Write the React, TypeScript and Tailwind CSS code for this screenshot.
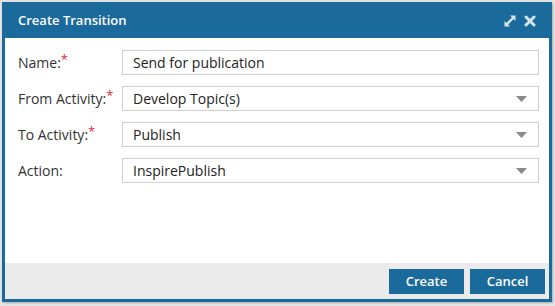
const fields = [
  { label: "Name:", required: true, value: "Send for publication", select: false },
  { label: "From Activity:", required: true, value: "Develop Topic(s)", select: true },
  { label: "To Activity:", required: true, value: "Publish", select: true },
  { label: "Action:", required: false, value: "InspirePublish", select: true },
]

const Caret = () => (
  <svg width="11" height="6" viewBox="0 0 11 6" className="shrink-0">
    <path d="M0 0 H11 L5.5 6 Z" fill="#8a8a8a" />
  </svg>
)

export default function App() {
  return (
    <div className="w-[555px] h-[306px] bg-[#e4e4e4] pl-[2px] pt-[2px]" style={{ fontFamily: '"Open Sans", "Noto Sans", sans-serif' }}>
      <div className="w-[550px] h-[300px] border-[3px] border-[#1b6a9c] flex flex-col bg-white shadow-[1px_1px_2px_rgba(0,0,0,0.25)]">
        <div className="h-[33px] shrink-0 bg-[#1b6a9c] flex items-center pl-[13px] pr-[13px]">
          <span className="text-white text-[13px] font-semibold -mt-[2px]">Create Transition</span>
          <div className="ml-auto flex items-center gap-[7px] -mt-[2px]">
            <svg width="14" height="14" viewBox="0 0 14 14">
              <path d="M3 11 L11 3" stroke="#d6e4ee" strokeWidth="2.4" />
              <path d="M7 1.5 H12.5 V7 Z" fill="#d6e4ee" />
              <path d="M1.5 7 V12.5 H7 Z" fill="#d6e4ee" />
            </svg>
            <svg width="12" height="12" viewBox="0 0 12 12">
              <path d="M2 2 L10 10 M10 2 L2 10" stroke="#d6e4ee" strokeWidth="3" strokeLinecap="round" />
            </svg>
          </div>
        </div>

        <div className="flex-1 flex flex-col gap-[11px] pt-[12px] pl-[13px] pr-[10px]">
          {fields.map((f) => (
            <div key={f.label} className="flex items-center h-[25px]">
              <div className="w-[104px] shrink-0 text-[14px] text-[#333] flex items-start">
                <span>{f.label}</span>
                {f.required && <span className="text-[#e8262b] text-[13px] leading-[12px] mt-[1px]">*</span>}
              </div>
              <div className="flex-1 h-[25px] border border-[#cfcfcf] flex items-center pl-[10px] pr-[11px] text-[14px] text-[#222]">
                <span>{f.value}</span>
                {f.select && <span className="ml-auto"><Caret /></span>}
              </div>
            </div>
          ))}
        </div>

        <div className="h-[36px] shrink-0 bg-[#ebebeb] flex items-start justify-end gap-[6px] pt-[6px] pr-[4px]">
          <button className="w-[75px] h-[25px] bg-[#1b6a9c] text-white text-[13px] font-semibold">Create</button>
          <button className="w-[75px] h-[25px] bg-[#1b6a9c] text-white text-[13px] font-semibold">Cancel</button>
        </div>
      </div>
    </div>
  )
}
